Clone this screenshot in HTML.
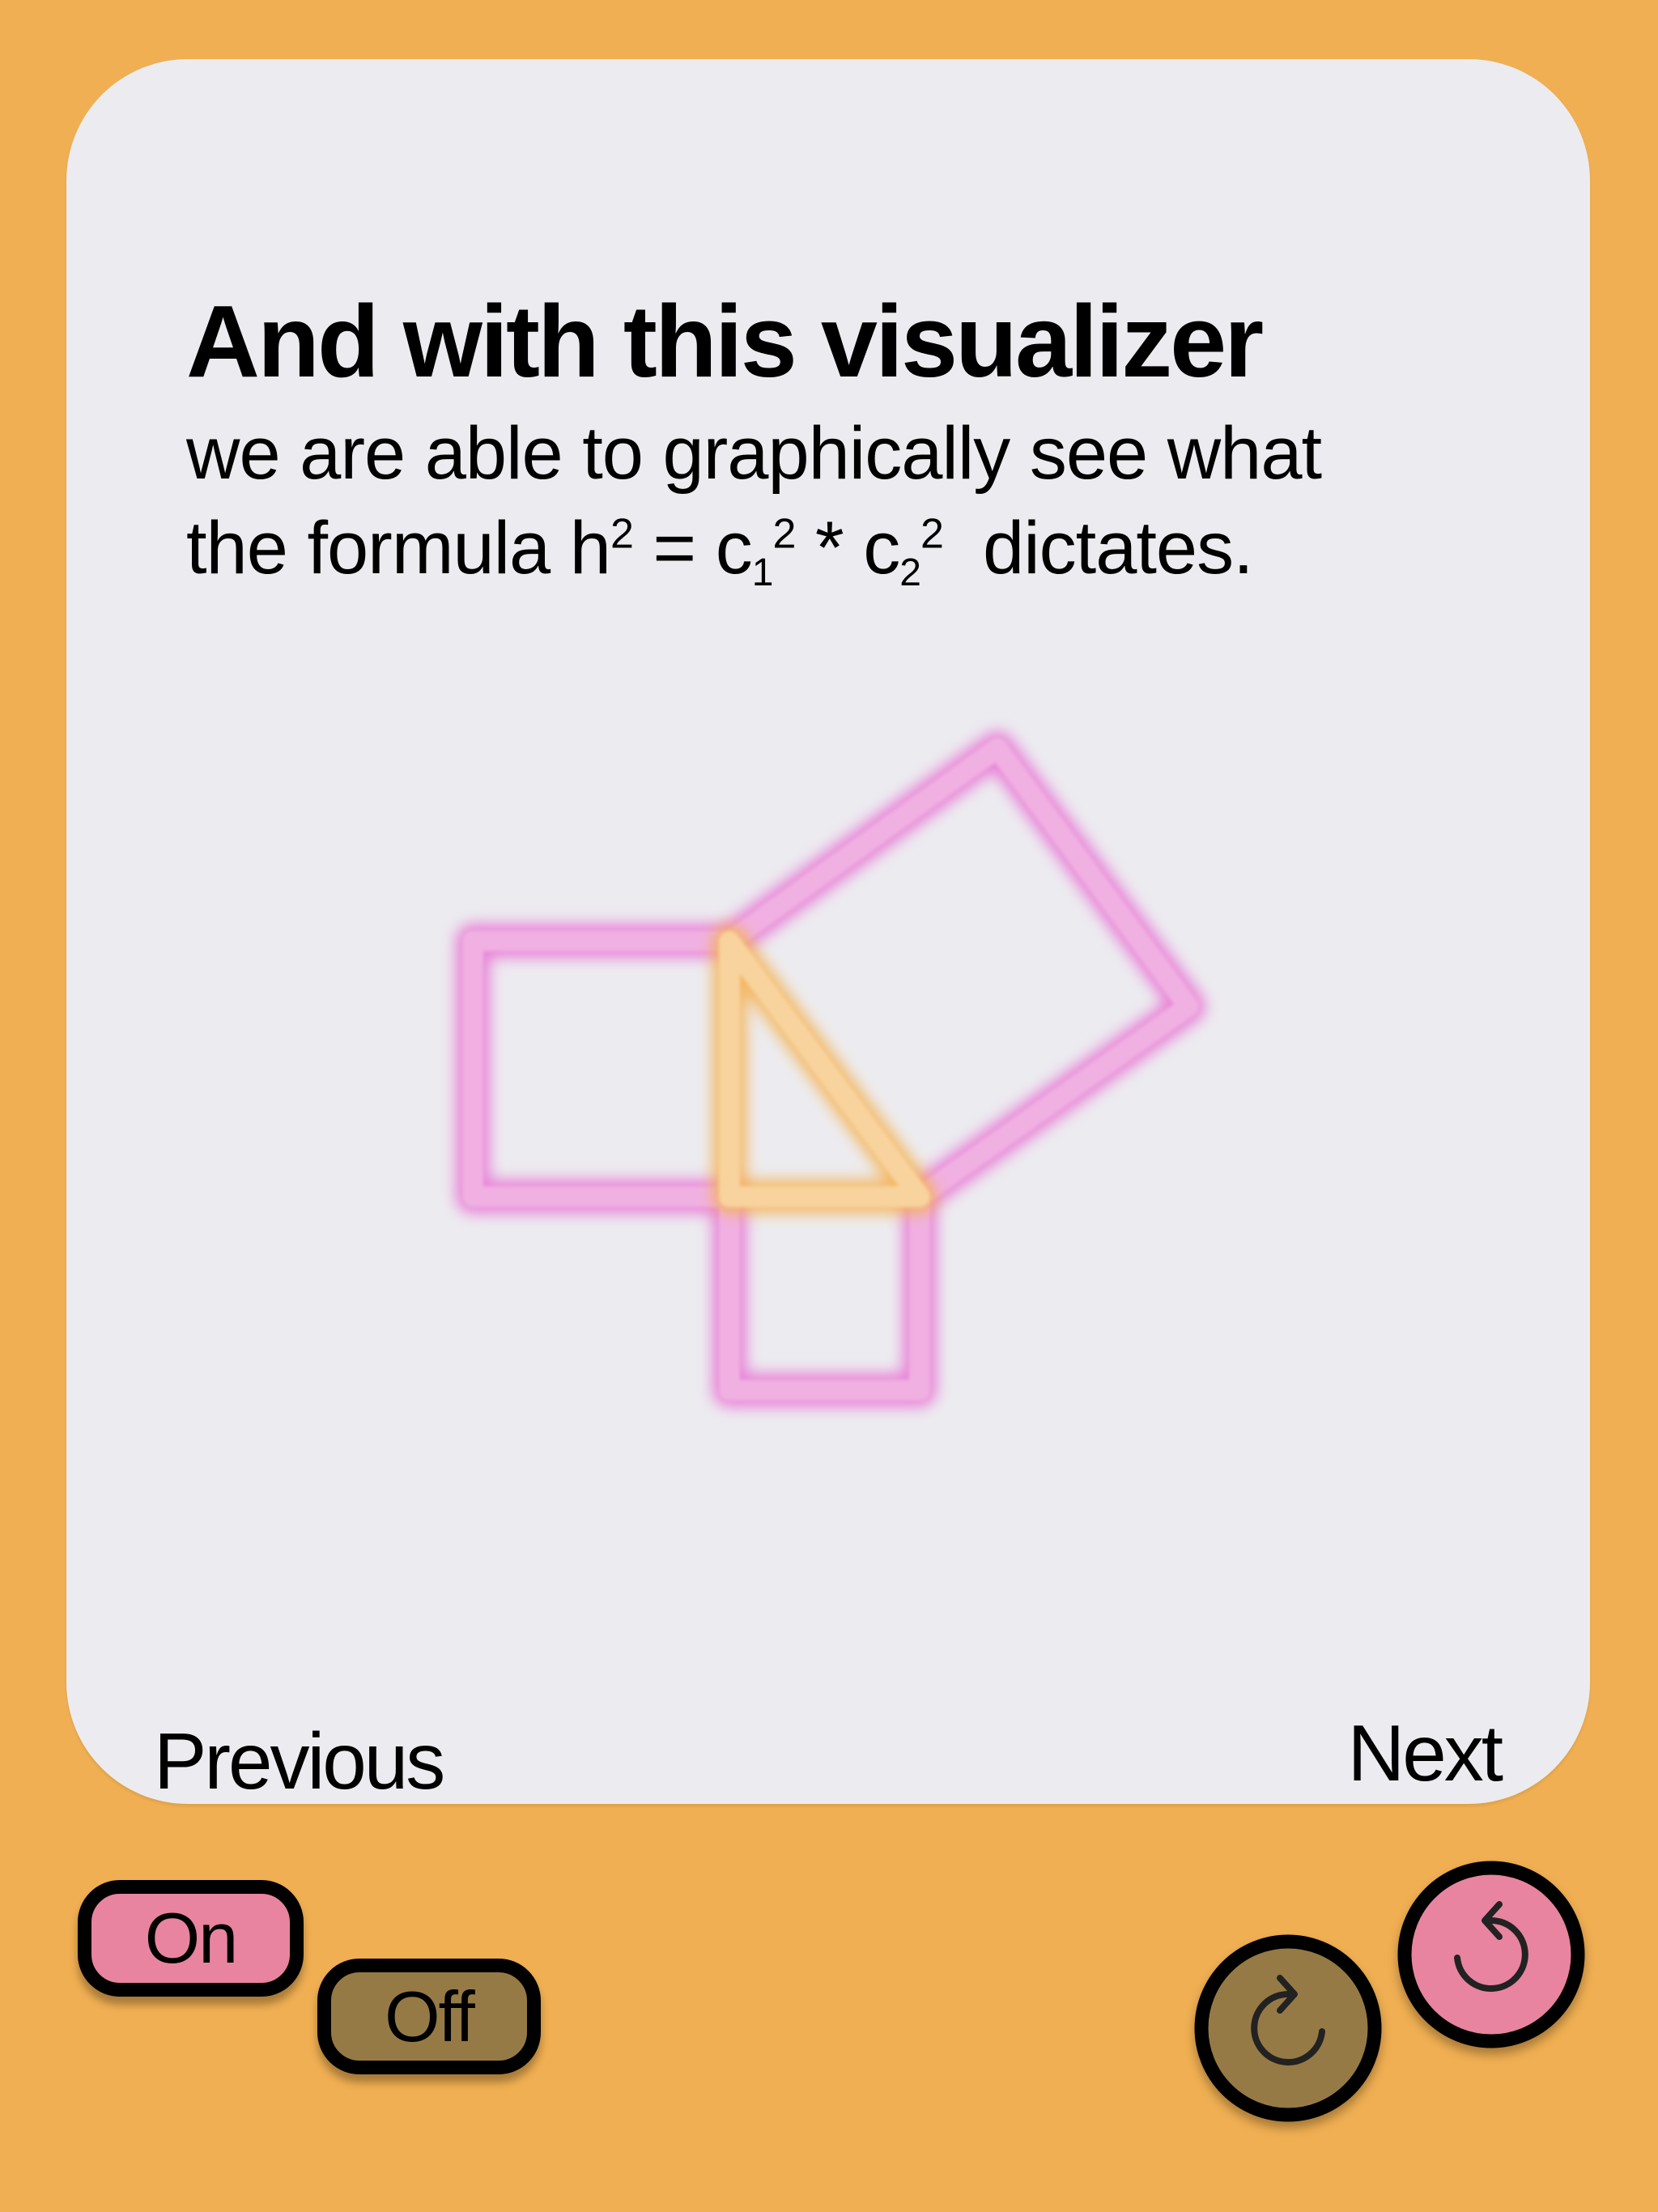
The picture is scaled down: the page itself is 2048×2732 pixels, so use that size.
<!DOCTYPE html>
<html><head><meta charset="utf-8"><style>
html,body{margin:0;padding:0}
body{width:2048px;height:2732px;background:#F0AF52;position:relative;overflow:hidden;font-family:"Liberation Sans",sans-serif;color:#000}
.card{position:absolute;left:82px;top:73px;width:1882px;height:2155px;background:#ECECF0;border-radius:150px;box-shadow:0 3px 3px rgba(0,0,0,.08)}
.t{position:absolute;white-space:nowrap}
.btn{position:absolute;box-sizing:border-box;border:17px solid #000;border-radius:52px;display:flex;align-items:center;justify-content:center;font-size:88px;box-shadow:0 10px 10px rgba(0,0,0,.3);letter-spacing:-2px}
sup{font-size:52px;line-height:0}
sub{font-size:48px;line-height:0;position:relative;top:-4px;vertical-align:sub}
</style></head><body>
<div class="card"></div>
<div class="t" style="left:230px;top:352px;font-size:126px;font-weight:bold;letter-spacing:-3px;line-height:140px">And with this visualizer</div>
<div class="t" style="left:230px;top:502px;font-size:92px;letter-spacing:-1px;line-height:117px">we are able to graphically see what<br>the formula h<sup>2</sup> = c<sub>1</sub><sup>2</sup> * c<sub>2</sub><sup>2</sup>&nbsp; dictates.</div>
<div class="t" style="left:190px;top:2120px;font-size:98px;letter-spacing:-3px;line-height:110px">Previous</div>
<div class="t" style="right:194px;top:2110px;font-size:98px;letter-spacing:-3px;line-height:110px">Next</div>

<svg width="2048" height="2732" style="position:absolute;left:0;top:0" xmlns="http://www.w3.org/2000/svg">
<defs>
<filter id="g" x="-20%" y="-20%" width="140%" height="140%"><feGaussianBlur stdDeviation="9"/></filter>
<filter id="s" x="-20%" y="-20%" width="140%" height="140%"><feGaussianBlur stdDeviation="2"/></filter>
</defs>
<g fill="none" stroke-linecap="round" stroke-linejoin="round">
<g filter="url(#g)" stroke="#E868D0" stroke-width="42" opacity=".8">
<path d="M584 1162 H901 M584 1162 V1478 M584 1478 H901"/>
<path d="M901 1478 V1717 M901 1717 H1136 M1136 1717 V1478"/>
<path d="M901 1163 L1232 924 M1232 924 L1468 1243 M1468 1243 L1136 1478"/>
</g>
<g filter="url(#s)" stroke="#F0B0E2" stroke-width="26">
<path d="M584 1162 H901 M584 1162 V1478 M584 1478 H901"/>
<path d="M901 1478 V1717 M901 1717 H1136 M1136 1717 V1478"/>
<path d="M901 1163 L1232 924 M1232 924 L1468 1243 M1468 1243 L1136 1478"/>
</g>
<g filter="url(#g)" stroke="#F5B050" stroke-width="42" opacity=".85">
<path d="M901 1163 V1478 M901 1478 H1136 M1136 1478 L901 1163"/>
</g>
<g filter="url(#s)" stroke="#F8D39E" stroke-width="26">
<path d="M901 1163 V1478 M901 1478 H1136 M1136 1478 L901 1163"/>
</g>
</g>
<g style="filter:drop-shadow(0 8px 6px rgba(0,0,0,.3))">
<circle cx="1591" cy="2505" r="107" fill="#967A45" stroke="#000" stroke-width="17"/>
<circle cx="1842" cy="2414" r="107" fill="#E8849F" stroke="#000" stroke-width="17"/>
</g>
<g fill="none" stroke="#222" stroke-width="8" stroke-linecap="round" stroke-linejoin="round">
<path d="M1800 2418 A42 42 0 1 0 1842 2372"/>
<path d="M1852 2352 L1834 2372 L1852 2392"/>
<path d="M1633 2509 A42 42 0 1 1 1591 2463"/>
<path d="M1581 2443 L1599 2463 L1581 2483"/>
</g>
</svg>
<div class="btn" style="left:96px;top:2322px;width:279px;height:144px;background:#E8849F">On</div>
<div class="btn" style="left:392px;top:2419px;width:276px;height:143px;background:#967A45">Off</div>
</body></html>
